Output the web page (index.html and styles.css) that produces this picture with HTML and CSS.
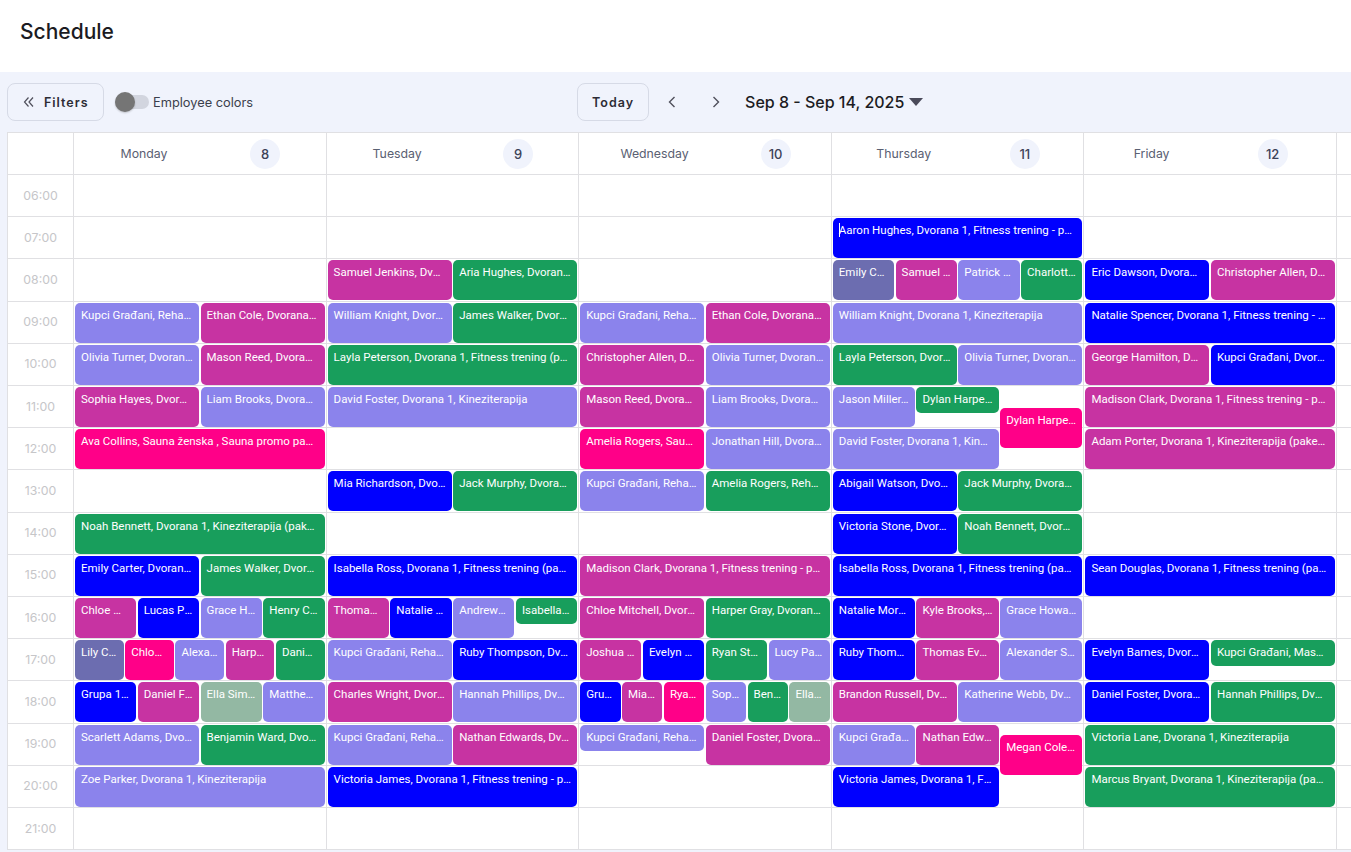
FILE: index.html
```html
<!DOCTYPE html>
<html lang="en">

<head>
    <meta charset="UTF-8">
    <title>Schedule</title>
    <link rel="stylesheet" href="styles.css">
</head>

<body>
    <header class="page-head">
        <h1 class="title">Schedule</h1>
    </header>

    <main class="board">
        <!-- toolbar -->
        <div class="toolbar">
            <button class="btn btn-filters">
                <svg class="icon" width="12" height="12" viewBox="0 0 12 12"><path d="M5.5 1.5 1.5 6l4 4.5M10 1.5 6 6l4 4.5" /></svg>
                Filters
            </button>
            <div class="toggle"><span class="toggle-thumb"></span></div>
            <span class="toggle-label">Employee colors</span>

            <div class="week-nav">
                <button class="btn btn-today">Today</button>
                <svg class="icon nav-arrow" width="10" height="14" viewBox="0 0 10 14"><path d="M7.5 2 2.5 7l5 5" /></svg>
                <svg class="icon nav-arrow" width="10" height="14" viewBox="0 0 10 14"><path d="M2.5 2l5 5-5 5" /></svg>
                <span class="week-label">Sep 8 - Sep 14, 2025</span>
                <svg class="caret" width="14" height="8" viewBox="0 0 14 8"><path d="M0 0h14L7 8z" /></svg>
            </div>
        </div>

        <!-- calendar -->
        <div class="calendar">
            <div class="row row-head">
                <div class="cell time"></div>
                <div class="cell day-head"><span>Monday</span><b>8</b></div>
                <div class="cell day-head"><span>Tuesday</span><b>9</b></div>
                <div class="cell day-head"><span>Wednesday</span><b>10</b></div>
                <div class="cell day-head"><span>Thursday</span><b>11</b></div>
                <div class="cell day-head"><span>Friday</span><b>12</b></div>
                <div class="cell"></div>
            </div>

            <div class="row">
                <div class="cell time">06:00</div>
                <div class="cell"></div><div class="cell"></div><div class="cell"></div><div class="cell"></div><div class="cell"></div><div class="cell"></div>
            </div>

            <div class="row">
                <div class="cell time">07:00</div>
                <div class="cell"></div><div class="cell"></div><div class="cell"></div>
                <div class="cell"><div class="ev bl has-cursor">Aaron Hughes, Dvorana 1, Fitness trening - popust</div></div>
                <div class="cell"></div><div class="cell"></div>
            </div>

            <div class="row">
                <div class="cell time">08:00</div>
                <div class="cell"></div>
                <div class="cell"><div class="ev mg">Samuel Jenkins, Dvorana 1, Kineziterapija</div><div class="ev gr">Aria Hughes, Dvorana 1, Kineziterapija</div></div>
                <div class="cell"></div>
                <div class="cell"><div class="ev sl">Emily Carter, Dvorana 1</div><div class="ev mg">Samuel Jenkins, Dvorana 1</div><div class="ev pu">Patrick Lane, Dvorana 1</div><div class="ev gr">Charlotte Reed, Dvorana 1</div></div>
                <div class="cell"><div class="ev bl">Eric Dawson, Dvorana 1, Kineziterapija</div><div class="ev mg">Christopher Allen, Dvorana 1</div></div>
                <div class="cell"></div>
            </div>

            <div class="row">
                <div class="cell time">09:00</div>
                <div class="cell"><div class="ev pu">Kupci Građani, Rehabilitacija</div><div class="ev mg">Ethan Cole, Dvorana 1, Kineziterapija</div></div>
                <div class="cell"><div class="ev pu">William Knight, Dvorana 1, Kineziterapija</div><div class="ev gr">James Walker, Dvorana 1, Kineziterapija</div></div>
                <div class="cell"><div class="ev pu">Kupci Građani, Rehabilitacija</div><div class="ev mg">Ethan Cole, Dvorana 1, Kineziterapija</div></div>
                <div class="cell"><div class="ev pu">William Knight, Dvorana 1, Kineziterapija</div></div>
                <div class="cell"><div class="ev bl">Natalie Spencer, Dvorana 1, Fitness trening - popust za penzionere</div></div>
                <div class="cell"></div>
            </div>

            <div class="row">
                <div class="cell time">10:00</div>
                <div class="cell"><div class="ev pu">Olivia Turner, Dvorana 1, Kineziterapija</div><div class="ev mg">Mason Reed, Dvorana 1, Kineziterapija</div></div>
                <div class="cell"><div class="ev gr">Layla Peterson, Dvorana 1, Fitness trening (paket 10 termina)</div></div>
                <div class="cell"><div class="ev mg">Christopher Allen, Dvorana 1</div><div class="ev pu">Olivia Turner, Dvorana 1, Kineziterapija</div></div>
                <div class="cell"><div class="ev gr">Layla Peterson, Dvorana 1, Fitness</div><div class="ev pu">Olivia Turner, Dvorana 1, Kineziterapija</div></div>
                <div class="cell"><div class="ev mg">George Hamilton, Dvorana 1</div><div class="ev bl">Kupci Građani, Dvorana 1, Fitness</div></div>
                <div class="cell"></div>
            </div>

            <div class="row">
                <div class="cell time">11:00</div>
                <div class="cell"><div class="ev mg">Sophia Hayes, Dvorana 1, Kineziterapija</div><div class="ev pu">Liam Brooks, Dvorana 1, Kineziterapija</div></div>
                <div class="cell"><div class="ev pu">David Foster, Dvorana 1, Kineziterapija</div></div>
                <div class="cell"><div class="ev mg">Mason Reed, Dvorana 1, Kineziterapija</div><div class="ev pu">Liam Brooks, Dvorana 1, Kineziterapija</div></div>
                <div class="cell"><div class="ev pu">Jason Miller, Dvorana 1</div><div class="ev gr short">Dylan Harper, Dvorana 1</div><div class="ev pk drop-half">Dylan Harper, Dvorana 1</div></div>
                <div class="cell"><div class="ev mg">Madison Clark, Dvorana 1, Fitness trening - popust za penzionere</div></div>
                <div class="cell"></div>
            </div>

            <div class="row">
                <div class="cell time">12:00</div>
                <div class="cell"><div class="ev pk">Ava Collins, Sauna ženska , Sauna promo paket 5 termina</div></div>
                <div class="cell"></div>
                <div class="cell"><div class="ev pk">Amelia Rogers, Sauna ženska</div><div class="ev pu">Jonathan Hill, Dvorana 1, Kineziterapija</div></div>
                <div class="cell thirds"><div class="ev pu wide">David Foster, Dvorana 1, Kineziterapija</div></div>
                <div class="cell"><div class="ev mg">Adam Porter, Dvorana 1, Kineziterapija (paket 10 termina)</div></div>
                <div class="cell"></div>
            </div>

            <div class="row">
                <div class="cell time">13:00</div>
                <div class="cell"></div>
                <div class="cell"><div class="ev bl">Mia Richardson, Dvorana 1, Kineziterapija</div><div class="ev gr">Jack Murphy, Dvorana 1, Kineziterapija</div></div>
                <div class="cell"><div class="ev pu">Kupci Građani, Rehabilitacija</div><div class="ev gr">Amelia Rogers, Rehabilitacija</div></div>
                <div class="cell"><div class="ev bl">Abigail Watson, Dvorana 1, Kineziterapija</div><div class="ev gr">Jack Murphy, Dvorana 1, Kineziterapija</div></div>
                <div class="cell"></div><div class="cell"></div>
            </div>

            <div class="row">
                <div class="cell time">14:00</div>
                <div class="cell"><div class="ev gr">Noah Bennett, Dvorana 1, Kineziterapija (paket 10 termina)</div></div>
                <div class="cell"></div><div class="cell"></div>
                <div class="cell"><div class="ev bl">Victoria Stone, Dvorana 1, Kineziterapija</div><div class="ev gr">Noah Bennett, Dvorana 1, Kineziterapija</div></div>
                <div class="cell"></div><div class="cell"></div>
            </div>

            <div class="row">
                <div class="cell time">15:00</div>
                <div class="cell"><div class="ev bl">Emily Carter, Dvorana 1, Kineziterapija</div><div class="ev gr">James Walker, Dvorana 1, Kineziterapija</div></div>
                <div class="cell"><div class="ev bl">Isabella Ross, Dvorana 1, Fitness trening (paket 10 termina)</div></div>
                <div class="cell"><div class="ev mg">Madison Clark, Dvorana 1, Fitness trening - popust za penzionere</div></div>
                <div class="cell"><div class="ev bl">Isabella Ross, Dvorana 1, Fitness trening (paket 10 termina)</div></div>
                <div class="cell"><div class="ev bl">Sean Douglas, Dvorana 1, Fitness trening (paket 10 termina)</div></div>
                <div class="cell"></div>
            </div>

            <div class="row">
                <div class="cell time">16:00</div>
                <div class="cell"><div class="ev mg">Chloe Mitchell, Dvorana 1</div><div class="ev bl">Lucas Price, Dvorana 1</div><div class="ev pu">Grace Howard, Dvorana 1</div><div class="ev gr">Henry Cole, Dvorana 1</div></div>
                <div class="cell"><div class="ev mg">Thomas Evans, Dvorana 1</div><div class="ev bl">Natalie Morris, Dvorana 1</div><div class="ev pu">Andrew Scott, Dvorana 1</div><div class="ev gr short">Isabella Ross, Dvorana 1</div></div>
                <div class="cell"><div class="ev mg">Chloe Mitchell, Dvorana 1, Kineziterapija</div><div class="ev gr">Harper Gray, Dvorana 1, Kineziterapija</div></div>
                <div class="cell"><div class="ev bl">Natalie Morris, Dvorana 1</div><div class="ev mg">Kyle Brooks, Dvorana 1</div><div class="ev pu">Grace Howard, Dvorana 1</div></div>
                <div class="cell"></div><div class="cell"></div>
            </div>

            <div class="row">
                <div class="cell time">17:00</div>
                <div class="cell"><div class="ev sl">Lily Clark, Dvorana 1</div><div class="ev pk">Chloe Mitchell, Sauna</div><div class="ev pu">Alexander Scott, Dvorana 1</div><div class="ev mg">Harper Gray, Dvorana 1</div><div class="ev gr">Daniel Foster, Dvorana 1</div></div>
                <div class="cell"><div class="ev pu">Kupci Građani, Rehabilitacija</div><div class="ev bl">Ruby Thompson, Dvorana 1, Kineziterapija</div></div>
                <div class="cell"><div class="ev mg">Joshua Bell, Dvorana 1</div><div class="ev bl">Evelyn Barnes, Dvorana 1</div><div class="ev gr">Ryan Stone, Dvorana 1</div><div class="ev pu">Lucy Palmer, Dvorana 1</div></div>
                <div class="cell"><div class="ev bl">Ruby Thompson, Dvorana 1</div><div class="ev mg">Thomas Evans, Dvorana 1</div><div class="ev pu">Alexander Scott, Dvorana 1</div></div>
                <div class="cell"><div class="ev bl">Evelyn Barnes, Dvorana 1, Kineziterapija</div><div class="ev gr short">Kupci Građani, Masaža</div></div>
                <div class="cell"></div>
            </div>

            <div class="row">
                <div class="cell time">18:00</div>
                <div class="cell"><div class="ev bl">Grupa 1, Dvorana 1</div><div class="ev mg">Daniel Foster, Dvorana 1</div><div class="ev sg">Ella Simmons, Dvorana 1</div><div class="ev pu">Matthew Hill, Dvorana 1</div></div>
                <div class="cell"><div class="ev mg">Charles Wright, Dvorana 1, Kineziterapija</div><div class="ev pu">Hannah Phillips, Dvorana 1, Kineziterapija</div></div>
                <div class="cell"><div class="ev bl">Grupa 1, Dvorana 1</div><div class="ev mg">Mia Richardson, Dvorana 1</div><div class="ev pk">Ryan Stone, Sauna</div><div class="ev pu">Sophia Hayes, Dvorana 1</div><div class="ev gr">Benjamin Ward, Dvorana 1</div><div class="ev sg">Ella Simmons, Dvorana 1</div></div>
                <div class="cell"><div class="ev mg">Brandon Russell, Dvorana 1, Kineziterapija</div><div class="ev pu">Katherine Webb, Dvorana 1, Kineziterapija</div></div>
                <div class="cell"><div class="ev bl">Daniel Foster, Dvorana 1, Kineziterapija</div><div class="ev gr">Hannah Phillips, Dvorana 1, Kineziterapija</div></div>
                <div class="cell"></div>
            </div>

            <div class="row">
                <div class="cell time">19:00</div>
                <div class="cell"><div class="ev pu">Scarlett Adams, Dvorana 1, Kineziterapija</div><div class="ev gr">Benjamin Ward, Dvorana 1, Kineziterapija</div></div>
                <div class="cell"><div class="ev pu">Kupci Građani, Rehabilitacija</div><div class="ev mg">Nathan Edwards, Dvorana 1, Kineziterapija</div></div>
                <div class="cell"><div class="ev pu short">Kupci Građani, Rehabilitacija</div><div class="ev mg">Daniel Foster, Dvorana 1, Kineziterapija</div></div>
                <div class="cell"><div class="ev pu">Kupci Građani, Rehabilitacija</div><div class="ev mg">Nathan Edwards, Dvorana 1</div><div class="ev pk drop-quarter">Megan Cole, Sauna ženska</div></div>
                <div class="cell"><div class="ev gr">Victoria Lane, Dvorana 1, Kineziterapija</div></div>
                <div class="cell"></div>
            </div>

            <div class="row">
                <div class="cell time">20:00</div>
                <div class="cell"><div class="ev pu">Zoe Parker, Dvorana 1, Kineziterapija</div></div>
                <div class="cell"><div class="ev bl">Victoria James, Dvorana 1, Fitness trening - popust za penzionere</div></div>
                <div class="cell"></div>
                <div class="cell thirds"><div class="ev bl wide">Victoria James, Dvorana 1, Fitness trening - popust</div></div>
                <div class="cell"><div class="ev gr">Marcus Bryant, Dvorana 1, Kineziterapija (paket 10 termina)</div></div>
                <div class="cell"></div>
            </div>

            <div class="row">
                <div class="cell time">21:00</div>
                <div class="cell"></div><div class="cell"></div><div class="cell"></div><div class="cell"></div><div class="cell"></div><div class="cell"></div>
            </div>
        </div>
    </main>
</body>

</html>
```

FILE: styles.css
```css
:root {
    --board-bg: #f0f3fc;
    --line: #e0e0e3;
    --btn-border: #d6dae6;
    --text: #1b1b22;
}

* {
    box-sizing: border-box;
}

html,
body {
    height: 100%;
}

body {
    margin: 0;
    overflow: hidden;
    background: #fff;
    color: var(--text);
    font-family: Inter, "Noto Sans", sans-serif;
}

/* page title */
.page-head {
    height: 72px;
    display: flex;
    align-items: center;
    padding: 0 0 10px 20px;
}

.title {
    margin: 0;
    font-size: 21px;
    font-weight: 500;
}

/* toolbar + calendar */
.board {
    background: var(--board-bg);
    padding-left: 7px;
    height: calc(100% - 72px);
    overflow: hidden;
}

.toolbar {
    height: 60px;
    display: flex;
    align-items: center;
}

.btn {
    height: 38px;
    display: flex;
    align-items: center;
    background: transparent;
    border: 1px solid var(--btn-border);
    border-radius: 8px;
    color: #2c2c35;
    font-family: inherit;
    font-size: 12.5px;
    font-weight: 600;
    letter-spacing: 1px;
}

.btn-filters {
    width: 97px;
    padding: 0 0 0 15px;
    gap: 9px;
}

.icon {
    fill: none;
    stroke: #50505c;
    stroke-width: 1.2;
}

.toggle {
    width: 34px;
    height: 14px;
    margin-left: 11px;
    background: #d2d5df;
    border-radius: 7px;
    display: flex;
    align-items: center;
}

.toggle-thumb {
    width: 20px;
    height: 20px;
    flex: none;
    background: #757575;
    border-radius: 50%;
    box-shadow: 0 1px 2px rgba(0, 0, 0, 0.2);
}

.toggle-label {
    margin-left: 4px;
    font-size: 12.8px;
    color: #3b3f4c;
}

.week-nav {
    display: flex;
    align-items: center;
    margin-left: 324px;
}

.btn-today {
    width: 72px;
    justify-content: center;
}

.nav-arrow {
    margin-left: 18px;
    stroke-width: 1.4;
}

.nav-arrow + .nav-arrow {
    margin-left: 34px;
}

.week-label {
    margin-left: 24px;
    font-size: 16px;
    font-weight: 500;
}

.caret {
    margin-left: 5px;
    fill: #4a4a5a;
}

/* calendar grid */
.calendar {
    width: 1344px;
    background: #fff;
    border-top: 1px solid var(--line);
}

.row {
    display: grid;
    grid-template-columns: 66px repeat(5, 252.6px) 15px;
    grid-template-rows: 42.2px;
    height: 42.2px;
}

.row-head {
    grid-template-rows: 42.12px;
    height: 42.12px;
}

.cell {
    display: grid;
    grid-auto-flow: column;
    grid-auto-columns: minmax(0, 1fr);
    align-items: start;
    gap: 1.5px;
    min-width: 0;
    min-height: 0;
    padding: 1px 1px 0;
    border-left: 1px solid var(--line);
    border-bottom: 1px solid var(--line);
}

.time {
    display: flex;
    align-items: center;
    justify-content: center;
    padding-bottom: 2px;
    font-size: 12.3px;
    color: #c6c6c9;
}

.day-head {
    display: flex;
    align-items: center;
    justify-content: space-around;
    padding: 0 5px 0 6px;
    font-size: 12.3px;
    color: #5a6072;
}

.day-head b {
    width: 30px;
    height: 30px;
    display: flex;
    align-items: center;
    justify-content: center;
    background: var(--board-bg);
    border-radius: 50%;
    font-size: 13px;
    font-weight: 500;
    color: #3c4258;
}

/* events */
.ev {
    height: 40px;
    padding: 5px 6px 0;
    border-radius: 5px;
    color: #fff;
    font-family: Roboto, Inter, sans-serif;
    font-size: 11.5px;
    font-weight: 400;
    line-height: 14px;
    white-space: nowrap;
    overflow: hidden;
    text-overflow: ellipsis;
}

.ev.short {
    height: 26px;
}

/* event that takes two of three columns */
.thirds {
    grid-template-columns: repeat(3, minmax(0, 1fr));
}

.ev.wide {
    grid-column: span 2;
}

/* events that start part way through the hour */
.drop-half {
    margin-top: 21px;
}

.drop-quarter {
    margin-top: 10px;
}

.has-cursor::before {
    content: '';
    display: inline-block;
    height: 14px;
    margin-right: -1px;
    border-left: 1px solid #fff;
    vertical-align: top;
}

.bl { background: #0000ff; }
.mg { background: #c733a2; }
.pu { background: #8b83ec; }
.gr { background: #189e5c; }
.pk { background: #ff0088; }
.sl { background: #6c6db0; }
.sg { background: #93b8a3; }
```
